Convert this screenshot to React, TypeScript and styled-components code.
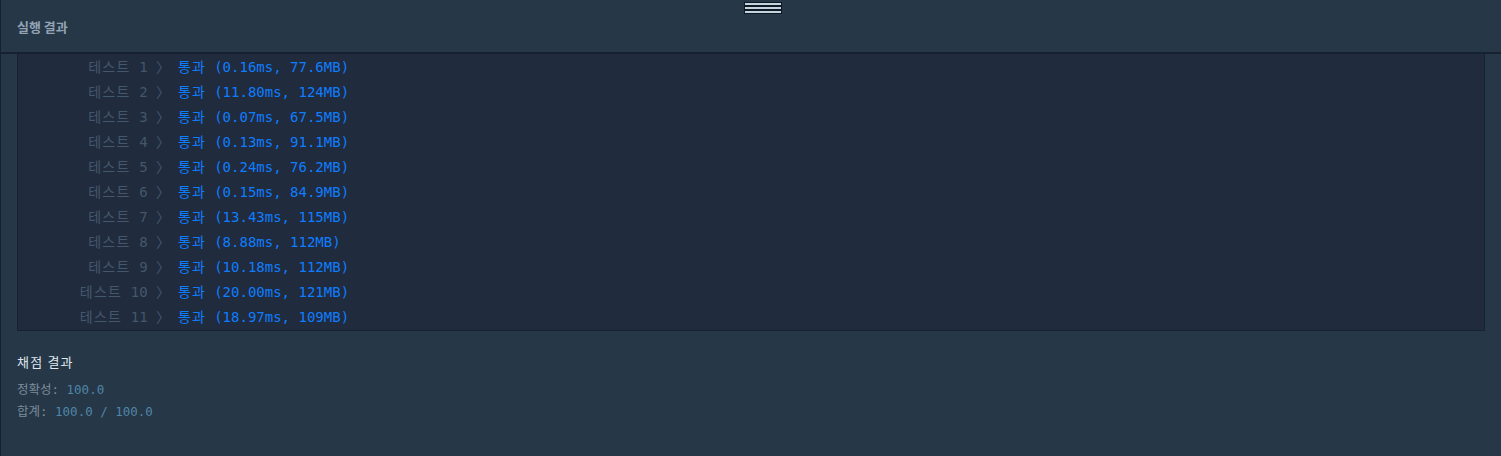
import styled, { createGlobalStyle } from "styled-components";

const GlobalStyle = createGlobalStyle`
  html, body {
    margin: 0;
    padding: 0;
    background-color: #263747;
  }
`;

export const Panel = styled.div`
  position: relative;
  width: 1501px;
  height: 456px;
  box-sizing: border-box;
  border-left: 1px solid #172230;
  background-color: #263747;
  overflow: hidden;
`;

export const Header = styled.div`
  display: flex;
  align-items: center;
  height: 52px;
  padding-left: 16px;
  border-bottom: 2px solid #172230;
`;

export const Title = styled.h5`
  margin: 0;
  font-family: "Noto Sans CJK KR", "Noto Sans", sans-serif;
  font-size: 13px;
  font-weight: 600;
  color: #92a3b5;
`;

export const Handle = styled.div`
  position: absolute;
  top: 2px;
  left: 743px;
  width: 38px;
  height: 12px;
  line-height: 0;
`;

export const Console = styled.div`
  margin: 0 16px 0 16px;
  padding-bottom: 1px;
  border: 1px solid #172230;
  border-top: none;
  background-color: #202b3d;
`;

export const Row = styled.div`
  display: grid;
  grid-template-columns: 152px 1fr;
  column-gap: 8px;
  height: 25px;
  box-sizing: border-box;
  padding-bottom: 2px;
  align-items: center;
  font-family: "DejaVu Sans Mono", "Noto Sans CJK KR", monospace;
  font-size: 14px;
  white-space: pre;
`;

export const Label = styled.span`
  text-align: right;
  color: #44576c;
`;

export const Passed = styled.span`
  color: #0f7dff;
`;

export const Hangul = styled.span<{ $spacing?: number }>`
  letter-spacing: ${(p) => p.$spacing ?? 1}px;
`;

export const Summary = styled.div`
  padding: 21px 16px 0 16px;
  font-family: "DejaVu Sans Mono", "Noto Sans CJK KR", monospace;
`;

export const SummaryTitle = styled.h6`
  margin: 0 0 7px 0;
  font-family: "Noto Sans CJK KR", "Noto Sans", sans-serif;
  font-size: 13px;
  font-weight: 400;
  line-height: 20px;
  letter-spacing: 1.2px;
  color: #dfe6ee;
`;

export const Line = styled.div`
  font-size: 12.5px;
  line-height: 22px;
  color: #7b8c9c;
`;

export const Score = styled.span`
  color: #4f86a8;
`;

const results = [
  "0.16ms, 77.6MB",
  "11.80ms, 124MB",
  "0.07ms, 67.5MB",
  "0.13ms, 91.1MB",
  "0.24ms, 76.2MB",
  "0.15ms, 84.9MB",
  "13.43ms, 115MB",
  "8.88ms, 112MB",
  "10.18ms, 112MB",
  "20.00ms, 121MB",
  "18.97ms, 109MB",
];

function HandleIcon() {
  return (
    <svg width="38" height="12" viewBox="0 0 38 12">
      {[0, 4, 8].map((y) => (
        <g key={y}>
          <rect x="0" y={y} width="38" height="4" fill="#0f1a26" />
          <rect x="1" y={y + 1} width="36" height="2" fill="#c4d4de" />
        </g>
      ))}
    </svg>
  );
}

export default function App() {
  return (
    <>
      <GlobalStyle />
      <Panel>
        <Header>
          <Title>실행 결과</Title>
        </Header>
        <Handle>
          <HandleIcon />
        </Handle>
        <Console>
          {results.map((r, i) => (
            <Row key={i}>
              <Label>
                <Hangul $spacing={1.3}>테스트</Hangul>
                {` ${i + 1} 〉`}
              </Label>
              <Passed>
                <Hangul>통과</Hangul>
                {` (${r})`}
              </Passed>
            </Row>
          ))}
        </Console>
        <Summary>
          <SummaryTitle>채점 결과</SummaryTitle>
          <Line>
            정확성: <Score>100.0</Score>
          </Line>
          <Line>
            합계: <Score>100.0 / 100.0</Score>
          </Line>
        </Summary>
      </Panel>
    </>
  );
}
